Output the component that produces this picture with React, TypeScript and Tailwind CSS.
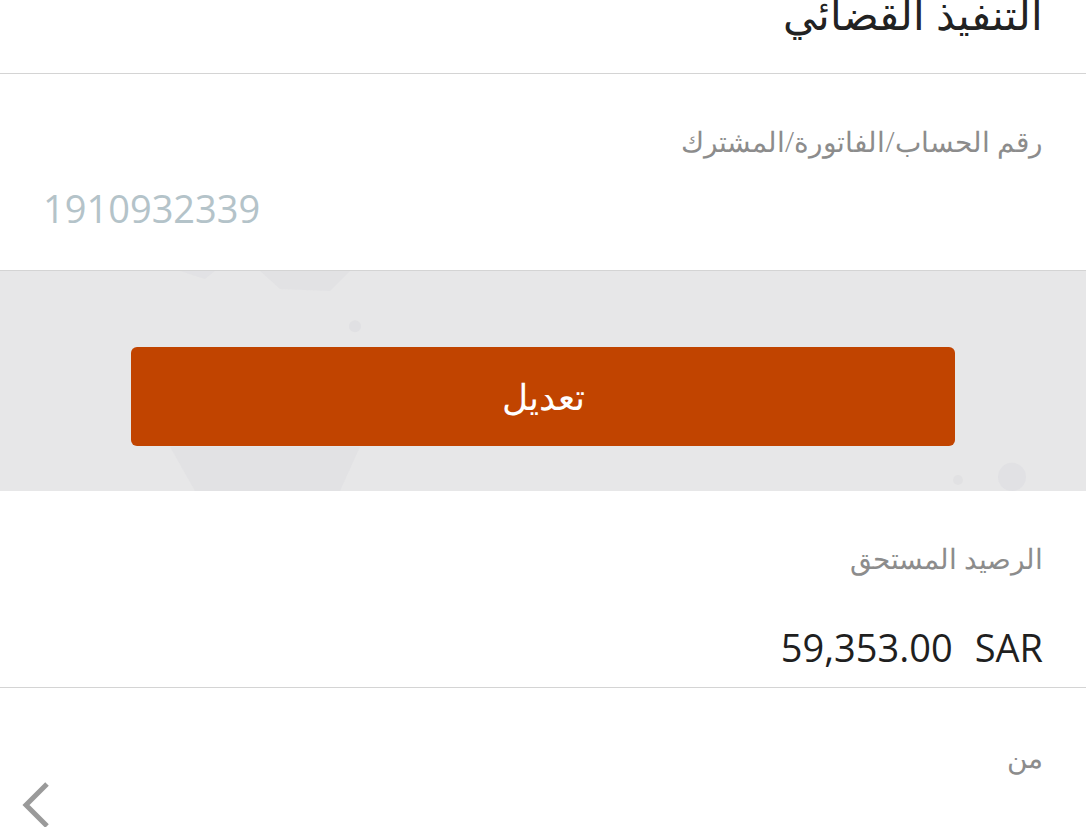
const font = "font-['Open_Sans','DejaVu_Sans',sans-serif]";

const Backdrop = () => (
    <svg className="absolute inset-0 w-full h-full" viewBox="0 0 1086 219" preserveAspectRatio="none">
        <polygon points="260,0 350,0 330,20 280,18" fill="#dfdfe2" opacity="0.7"/>
        <polygon points="180,0 215,0 205,8" fill="#e0e0e3" opacity="0.6"/>
        <circle cx="355" cy="55" r="6" fill="#dcdcdf" opacity="0.6"/>
        <polygon points="170,175 360,175 340,219 195,219" fill="#dfdfe3" opacity="0.7"/>
        <circle cx="1012" cy="205" r="14" fill="#dedee2" opacity="0.7"/>
        <circle cx="958" cy="208" r="5" fill="#dddde0" opacity="0.6"/>
    </svg>
);

const App = () => {
    return (
        <div className={`w-[1086px] h-[827px] overflow-hidden bg-white ${font}`}>
            {/* header */}
            <div className="h-[74px] border-b border-[#d4d4d4] overflow-hidden" dir="rtl">
                <div className="px-[43px] -mt-[12px] text-[42px] leading-[52px] font-light text-[#222]">
                    التنفيذ القضائي
                </div>
            </div>

            {/* account no */}
            <div className="h-[197px] border-b border-[#d4d4d4] flex flex-col">
                <div dir="rtl" className="px-[43px] pt-[50px] text-[28px] leading-[34px] font-light text-[#8c8c8c]">
                    رقم الحساب/الفاتورة/المشترك
                </div>
                <div className="px-[43px] mt-[28px] text-[38px] leading-[44px] text-[#b4c3c9]">
                    1910932339
                </div>
            </div>

            {/* edit band */}
            <div className="relative h-[220px] bg-[#e7e7e8] flex justify-center pt-[76px]">
                <Backdrop/>
                <button
                    className="relative w-[824px] h-[99px] rounded-[6px] bg-[#c14400] text-white text-[36px] font-light"
                >
                    تعديل
                </button>
            </div>

            {/* balance */}
            <div className="h-[197px] border-b border-[#d4d4d4] flex flex-col" dir="rtl">
                <div className="px-[43px] pt-[50px] text-[28px] leading-[34px] font-light text-[#8c8c8c]">
                    الرصيد المستحق
                </div>
                <div dir="ltr" className="px-[43px] mt-[50px] flex justify-end gap-[22px] text-[38px] leading-[44px] text-[#1f1f1f]">
                    <span>59,353.00</span>
                    <span>SAR</span>
                </div>
            </div>

            {/* from */}
            <div className="relative h-[140px]">
                <div dir="rtl" className="px-[43px] pt-[52px] text-[28px] leading-[34px] font-light text-[#8c8c8c]">
                    من
                </div>
                <svg className="absolute left-0 top-[94px]" width="60" height="50" viewBox="0 0 60 50">
                    <polyline points="47,2 26,23 47,44" fill="none" stroke="#9a9a9a" strokeWidth="5"/>
                </svg>
            </div>
        </div>
    );
};

export default App;
